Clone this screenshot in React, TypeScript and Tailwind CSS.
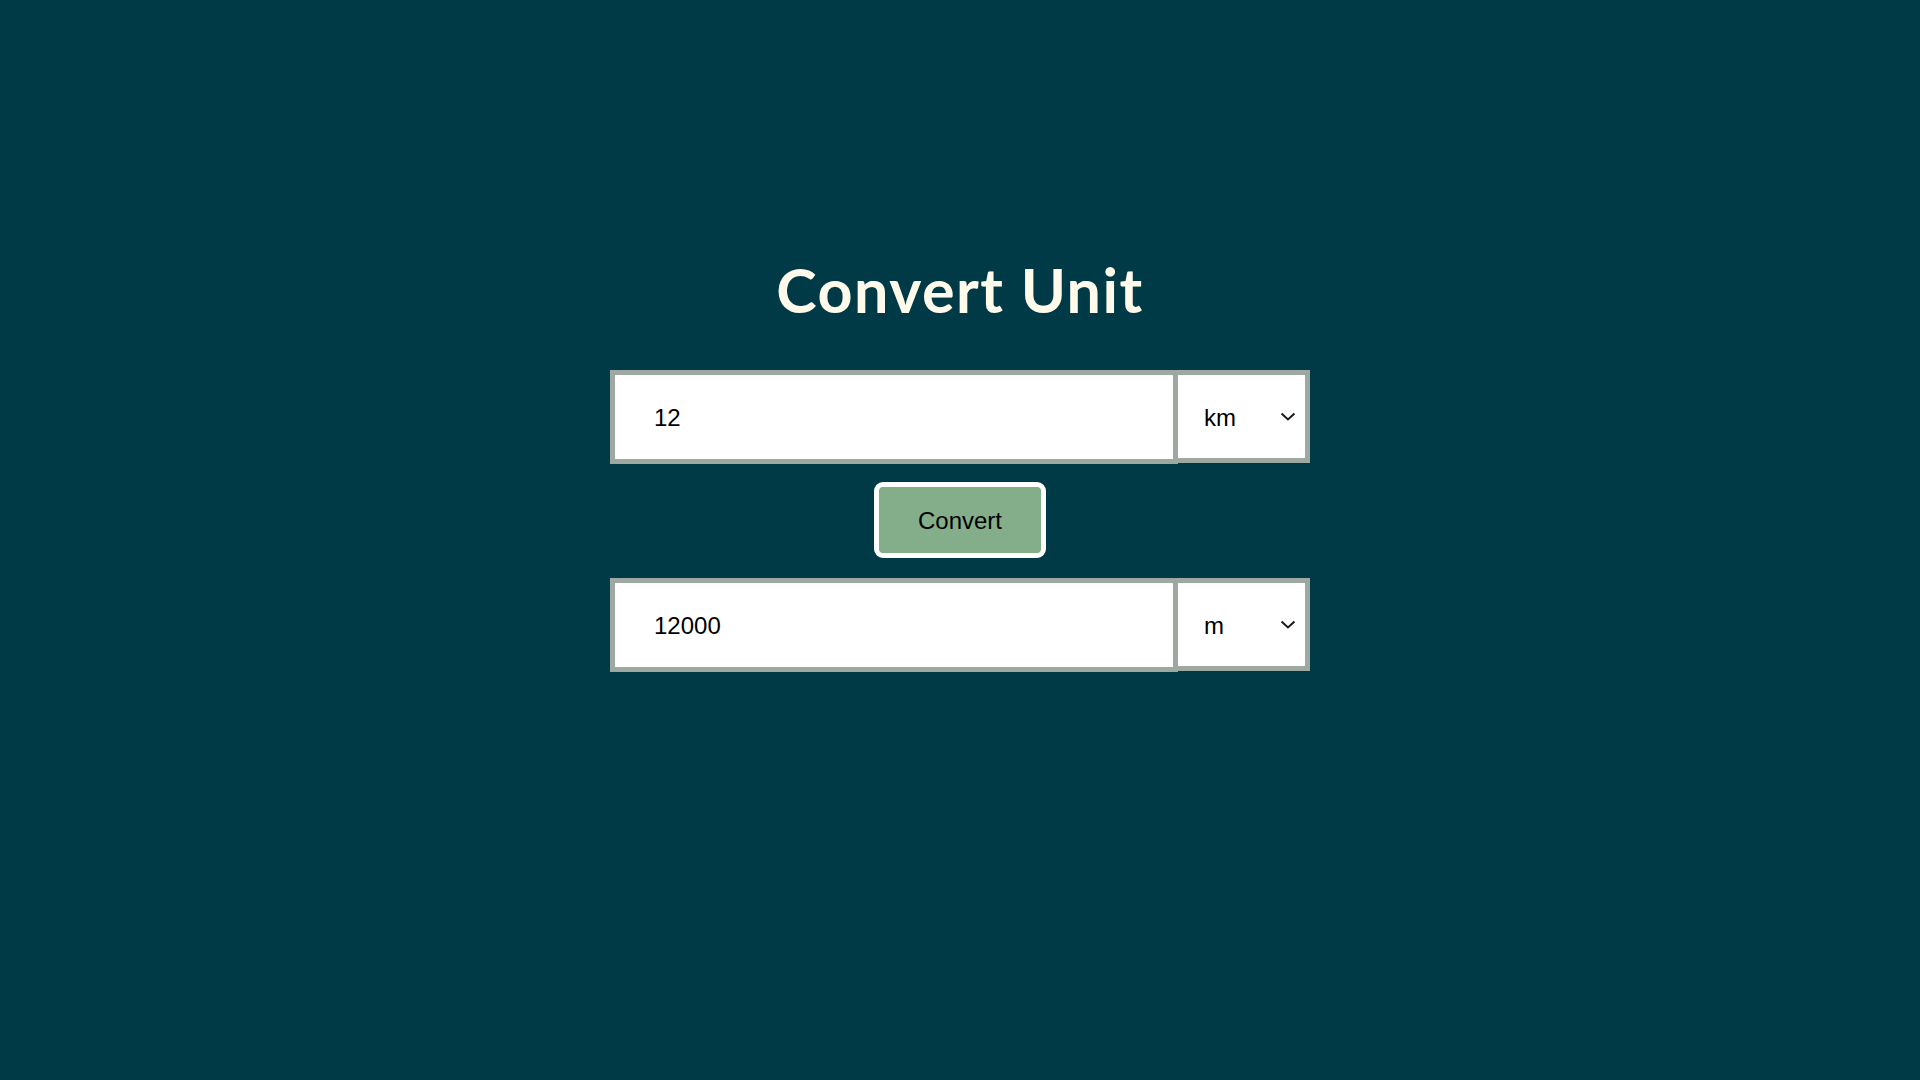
import React, { useState } from 'react';

const units: Record<string, number> = { km: 1000, m: 1, cm: 0.01, mm: 0.001 };

function UnitRow({
  value,
  unit,
  onValue,
  onUnit,
}: {
  value: string;
  unit: string;
  onValue: (v: string) => void;
  onUnit: (u: string) => void;
}) {
  return (
    <div className="flex items-start w-[700px]">
      <input
        type="text"
        value={value}
        onChange={(e) => onValue(e.target.value)}
        className="flex-1 min-w-0 h-[94px] bg-white border-[5px] border-[#9ca8a0] pl-[39px] pt-[2px] text-[24px] text-black outline-none font-['Liberation_Sans',Arial,sans-serif]"
      />
      <div className="relative w-[132px] h-[93px]">
        <select
          value={unit}
          onChange={(e) => onUnit(e.target.value)}
          className="appearance-none w-full h-full bg-white border-y-[5px] border-r-[5px] border-[#9ca8a0] pl-[26px] pt-[2px] text-[24px] text-black outline-none font-['Liberation_Sans',Arial,sans-serif]"
        >
          {Object.keys(units).map((u) => (
            <option key={u} value={u}>
              {u}
            </option>
          ))}
        </select>
        <svg
          className="absolute right-[14px] top-[42px] pointer-events-none"
          width="16"
          height="9"
          viewBox="0 0 16 9"
          fill="none"
        >
          <path d="M1.5 1.5 L8 7.5 L14.5 1.5" stroke="#1a1a1a" strokeWidth="2" />
        </svg>
      </div>
    </div>
  );
}

export default function App() {
  const [from, setFrom] = useState('12');
  const [fromUnit, setFromUnit] = useState('km');
  const [to, setTo] = useState('12000');
  const [toUnit, setToUnit] = useState('m');

  const convert = () => {
    const n = parseFloat(from);
    if (isNaN(n)) return;
    setTo(String((n * units[fromUnit]) / units[toUnit]));
  };

  return (
    <div className="min-h-screen w-full bg-[#003a47] flex flex-col items-center pt-[259px]">
      <h1 className="text-[61px] leading-none font-bold text-[#fffaea] tracking-[1.5px] font-['Comic_Sans_MS','Lato',sans-serif]">
        Convert Unit
      </h1>
      <div className="mt-[50px]">
        <UnitRow value={from} unit={fromUnit} onValue={setFrom} onUnit={setFromUnit} />
      </div>
      <button
        onClick={convert}
        className="mt-[18px] w-[172px] h-[76px] bg-[#84ae8a] border-[5px] border-white rounded-[9px] pt-[1px] text-[24px] text-black font-['Liberation_Sans',Arial,sans-serif]"
      >
        Convert
      </button>
      <div className="mt-[20px]">
        <UnitRow value={to} unit={toUnit} onValue={setTo} onUnit={setToUnit} />
      </div>
    </div>
  );
}
